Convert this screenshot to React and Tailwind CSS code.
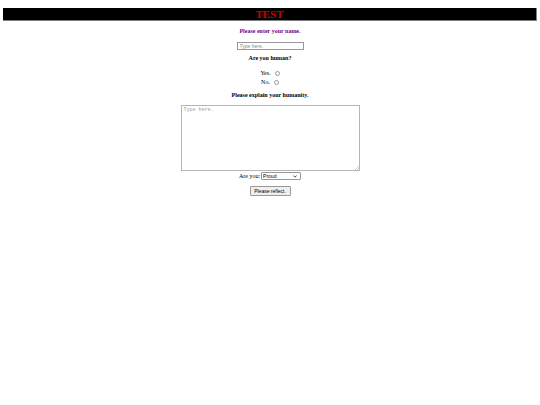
import React from "react";

const App = () => {
  return (
    <div className="w-[540px] h-[405px] bg-white font-['Liberation_Serif',serif] flex flex-col">
      {/* Header */}
      <div className="mt-[8px] mx-[3px] h-[13px] bg-black border-r border-b border-[#808080] flex items-center justify-center">
        <h1 className="text-[11px] leading-[11px] font-bold text-[#cc0000]">TEST</h1>
      </div>

      {/* Form */}
      <form className="flex flex-col items-center">
        <h2 className="mt-[7px] h-[7px] text-[6px] leading-[7px] font-bold text-[#800080]">
          Please enter your name.
        </h2>
        <input
          type="text"
          placeholder="Type here."
          className="mt-[7px] w-[67px] h-[8px] px-[2px] border border-[#999] text-[5px] leading-[6px] font-['Liberation_Sans',sans-serif] placeholder:text-[#888]"
        />

        <h3 className="mt-[5px] h-[7px] text-[6px] leading-[7px] font-bold text-black">Are you human?</h3>

        <div className="mt-[7px] flex flex-col items-center text-[6px] leading-[9px] font-normal">
          <label className="flex items-center gap-[4px]">
            Yes.
            <span className="w-[5px] h-[5px] rounded-full border border-[#999] inline-block" />
          </label>
          <label className="flex items-center gap-[4px]">
            No.
            <span className="w-[5px] h-[5px] rounded-full border border-[#999] inline-block" />
          </label>
        </div>

        <h3 className="mt-[5px] h-[7px] text-[6px] leading-[7px] font-bold text-black">
          Please explain your humanity.
        </h3>

        <div className="relative mt-[6px] w-[179px] h-[66px]">
          <textarea
            placeholder="Type here."
            className="w-full h-full resize-none border border-[#b5b5b5] px-[2px] py-[1px] text-[5px] leading-[6px] font-['Liberation_Mono',monospace] placeholder:text-[#999]"
          />
          <svg className="absolute right-[1px] bottom-[1px]" width="4" height="4" viewBox="0 0 4 4">
            <path d="M4 0 L0 4 M4 2 L2 4" stroke="#aaa" strokeWidth="0.6" />
          </svg>
        </div>

        <div className="mt-[1px] flex items-center gap-[1px] text-[6px] leading-[8px]">
          <span>Are you:</span>
          <div className="relative w-[40px] h-[8px] border border-[#999] rounded-[1px] flex items-center px-[1px]">
            <span className="font-['Liberation_Sans',sans-serif] text-[5px] leading-[6px]">Proud</span>
            <svg className="absolute right-[3px] top-[2px]" width="4" height="3" viewBox="0 0 4 3">
              <path d="M0.4 0.5 L2 2.2 L3.6 0.5" fill="none" stroke="#000" strokeWidth="0.7" />
            </svg>
          </div>
        </div>

        <button
          type="button"
          className="mt-[6px] w-[41px] h-[10px] bg-[#efefef] border border-[#999] rounded-[1px] text-[5px] leading-[8px] font-['Liberation_Sans',sans-serif] text-black"
        >
          Please reflect.
        </button>
      </form>
    </div>
  );
};

export default App;
